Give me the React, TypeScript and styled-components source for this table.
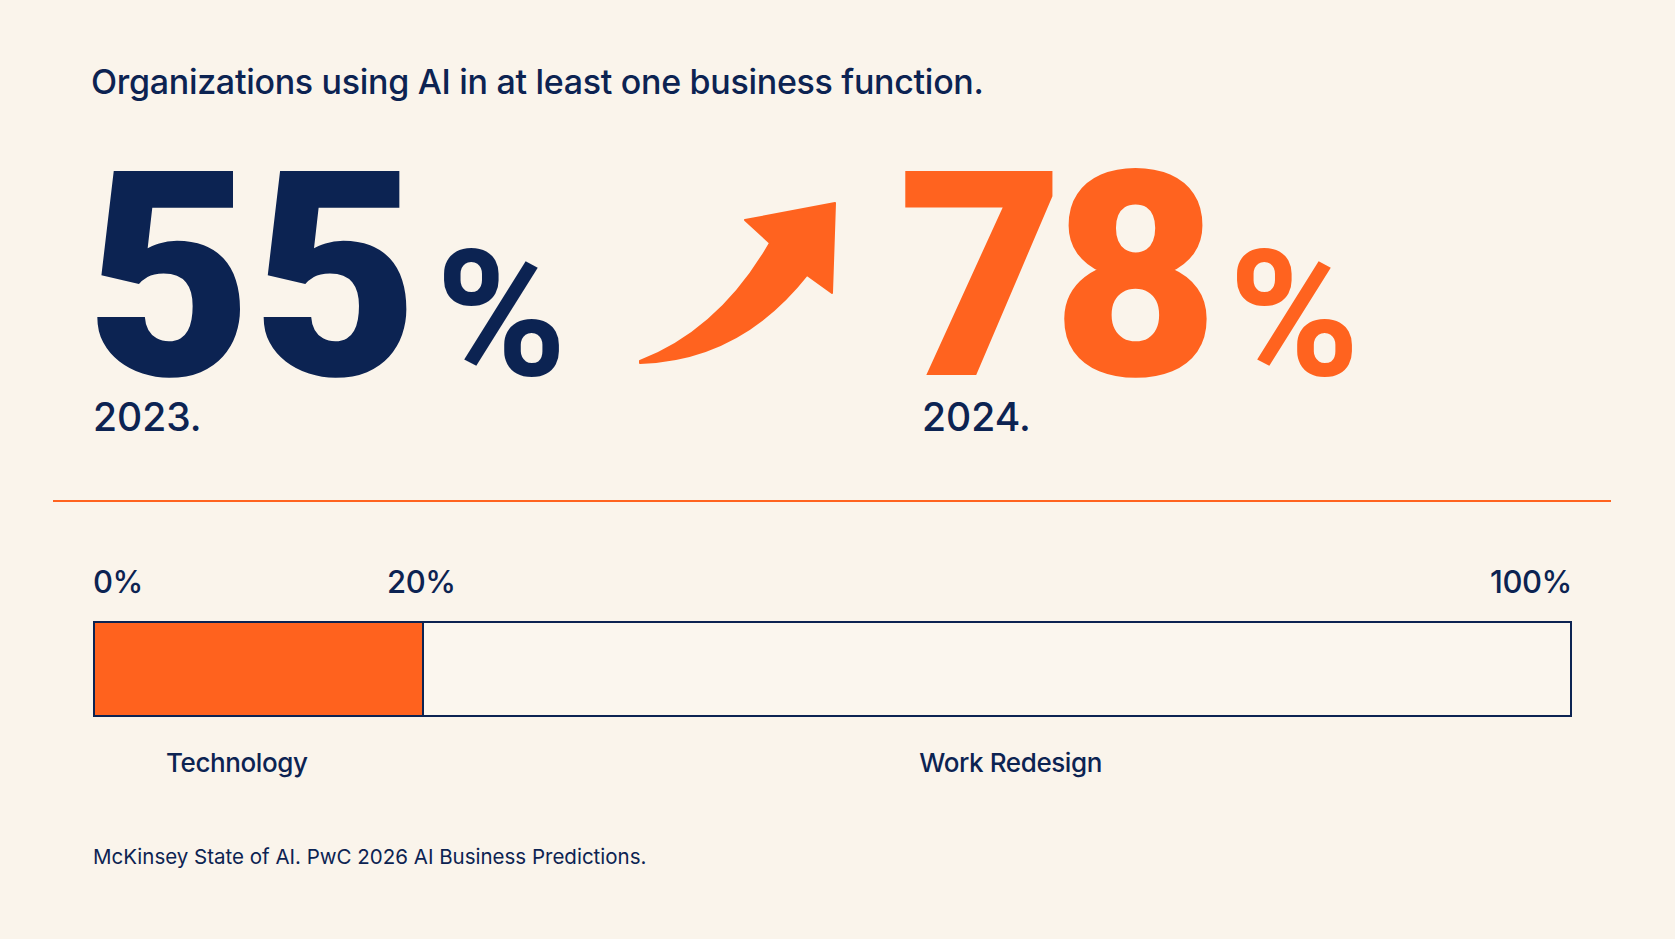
import React from "react";
import styled, { createGlobalStyle } from "styled-components";

const GlobalStyle = createGlobalStyle`
  html, body {
    margin: 0;
    padding: 0;
    background: #faf4eb;
  }
  body {
    font-family: Inter, "Noto Sans", "Liberation Sans", sans-serif;
    color: #0c2352;
  }
`;

const Page = styled.main`
  width: 1675px;
  height: 939px;
  box-sizing: border-box;
  padding: 61px 103px 0 93px;
  display: flex;
  flex-direction: column;
  background: #faf4eb;
  overflow: hidden;
`;

const Title = styled.h1`
  margin: 0 0 0 -2px;
  font-size: 34px;
  line-height: 42px;
  font-weight: 500;
  letter-spacing: -0.3px;
  color: #0c2352;
`;

const StatsRow = styled.section`
  margin-top: 54px;
  display: grid;
  grid-template-columns: 539px 272px 1fr;
  align-items: start;
`;

const Stat = styled.div<{ $shift?: number }>`
  display: flex;
  flex-direction: column;
  margin-left: ${(p) => p.$shift ?? 0}px;
`;

const BigNumber = styled.div<{ $tone: "navy" | "orange"; $kern?: number; $nudge?: number }>`
  font-family: Roboto, Inter, "Liberation Sans", sans-serif;
  font-size: 287px;
  line-height: 240px;
  height: 240px;
  margin-left: ${(p) => p.$nudge ?? 0}px;
  font-weight: 900;
  letter-spacing: ${(p) => p.$kern ?? 0}px;
  white-space: nowrap;
  color: ${(p) => (p.$tone === "navy" ? "#0c2352" : "#ff631f")};
`;

const Percent = styled.span<{ $gap: number }>`
  font-family: Roboto, Inter, "Liberation Sans", sans-serif;
  font-size: 177px;
  font-weight: 700;
  letter-spacing: 0;
  margin-left: ${(p) => p.$gap}px;
`;

const Year = styled.div<{ $indent?: number }>`
  padding-left: ${(p) => p.$indent ?? 0}px;
  font-size: 39px;
  line-height: 40px;
  font-weight: 500;
  color: #0c2352;
`;

const ArrowSvg = styled.svg`
  margin-top: 41px;
  width: 210px;
  height: 172px;
  display: block;
`;

const Divider = styled.hr`
  margin: 63px -39px 0 -40px;
  border: 0;
  height: 2px;
  background: #ff631f;
`;

const ScaleRow = styled.div`
  margin-top: 60px;
  display: grid;
  grid-template-columns: 22.2% 1fr;
  font-size: 31px;
  line-height: 40px;
  font-weight: 500;
  letter-spacing: -0.4px;
`;

const Tick = styled.span<{ $align: "start" | "center" | "end" }>`
  justify-self: ${(p) => (p.$align === "end" ? "end" : "start")};
  grid-row: 1;
  transform: ${(p) => (p.$align === "center" ? "translateX(-50%)" : "none")};
`;

const Bar = styled.div`
  margin-top: 19px;
  height: 96px;
  box-sizing: border-box;
  border: 2px solid #0c2352;
  background: #fbf6ee;
  display: flex;
`;

const Fill = styled.div`
  height: 100%;
  background: #ff621e;
  border-right: 2px solid #0c2352;
`;

const CategoryRow = styled.div`
  margin-top: 30px;
  display: grid;
  grid-template-columns: 22.2% 1fr;
  font-size: 26px;
  line-height: 32px;
  font-weight: 500;
  letter-spacing: -0.4px;
`;

const Category = styled.span<{ $pad: number; $center?: boolean }>`
  justify-self: ${(p) => (p.$center ? "center" : "start")};
  padding-left: ${(p) => p.$pad}px;
`;

const Source = styled.footer`
  margin-top: 65px;
  font-size: 20.5px;
  line-height: 26px;
  font-weight: 400;
  color: #0c2352;
`;

const fillPercent = 22.2;

export default function App() {
  return (
    <>
      <GlobalStyle />
      <Page>
        <Title>Organizations using AI in at least one business function.</Title>

        <StatsRow>
          <Stat>
            <BigNumber $tone="navy" $nudge={-7}>
              55<Percent $gap={17}>%</Percent>
            </BigNumber>
            <Year>2023.</Year>
          </Stat>

          <ArrowSvg viewBox="0 0 210 172" aria-hidden="true">
            <path
              d="M8 163 Q88 132 138 45 L113 22 L203 5 L200 95 L175 77 Q108 162 8 165 Z"
              fill="#ff631f"
              stroke="#ff631f"
              strokeWidth="2"
              strokeLinejoin="round"
            />
          </ArrowSvg>

          <Stat $shift={-6}>
            <BigNumber $tone="orange" $kern={-12}>
              78<Percent $gap={22}>%</Percent>
            </BigNumber>
            <Year $indent={24}>2024.</Year>
          </Stat>
        </StatsRow>

        <Divider />

        <ScaleRow>
          <Tick $align="start">0%</Tick>
          <Tick $align="center">20%</Tick>
          <Tick $align="end">100%</Tick>
        </ScaleRow>

        <Bar>
          <Fill style={{ width: `${fillPercent}%` }} />
        </Bar>

        <CategoryRow>
          <Category $pad={73}>Technology</Category>
          <Category $pad={28} $center>
            Work Redesign
          </Category>
        </CategoryRow>

        <Source>McKinsey State of AI. PwC 2026 AI Business Predictions.</Source>
      </Page>
    </>
  );
}
